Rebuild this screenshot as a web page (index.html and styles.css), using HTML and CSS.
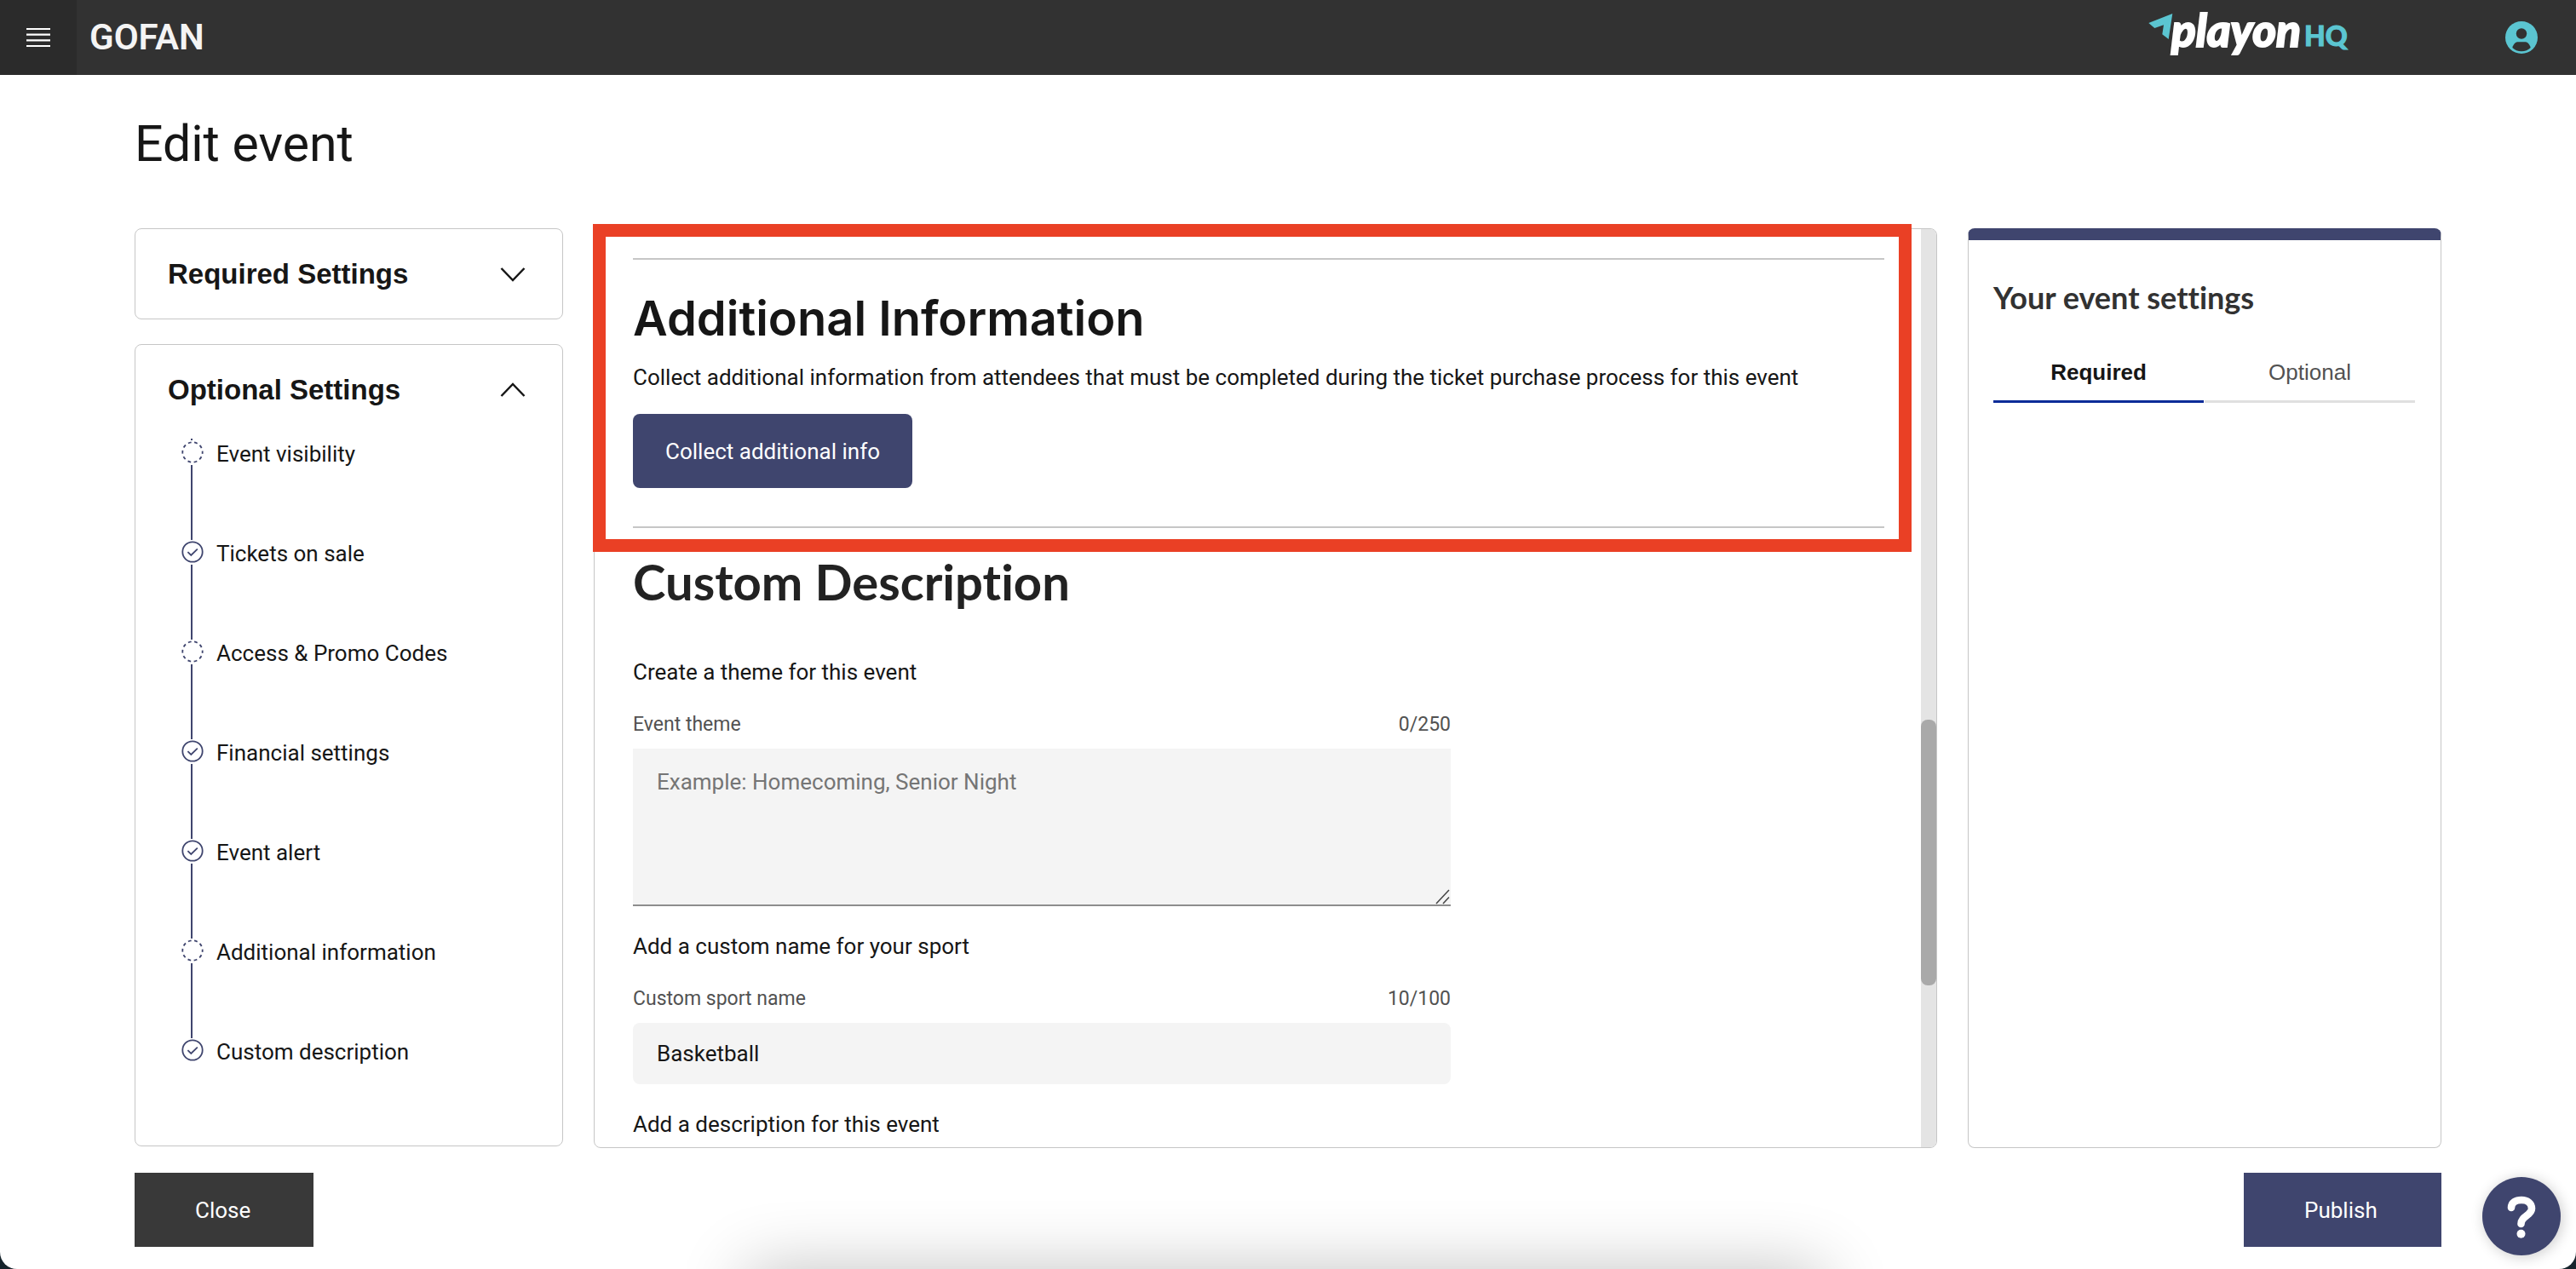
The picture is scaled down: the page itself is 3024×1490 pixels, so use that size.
FILE: index.html
```html
<!DOCTYPE html>
<html lang="en">
<head>
<meta charset="utf-8">
<meta name="viewport" content="width=device-width, initial-scale=1">
<title>GOFAN – Edit event</title>
<link rel="stylesheet" href="styles.css">
</head>
<body>
<svg class="sprite" aria-hidden="true">
  <symbol id="step-empty" viewBox="0 0 28 29">
    <circle cx="14" cy="14" r="11.7" fill="none" stroke="#3f456e" stroke-width="1.8" stroke-dasharray="3.8 3.55" stroke-dashoffset="1.9"/>
  </symbol>
  <symbol id="step-done" viewBox="0 0 28 29">
    <circle cx="14" cy="14" r="11.7" fill="none" stroke="#3f456e" stroke-width="1.8"/>
    <path d="M8.4 14.2l3.9 3.8 7.5-7.4" fill="none" stroke="#3f456e" stroke-width="1.8"/>
  </symbol>
</svg>
<div class="app">
  <header class="topbar">
    <button class="menu" type="button" aria-label="Open menu">
      <svg width="28" height="24" viewBox="0 0 28 24"><path d="M0 2h28M0 8.700h28M0 15.400h28M0 22h28" stroke="#fff" stroke-width="2.200"/></svg>
    </button>
    <a class="brand" href="#">GOFAN</a>
    <svg class="logo" width="240" height="88" viewBox="0 0 240 88" role="img" aria-label="playon HQ">
      <path d="M2.300 27L30.300 16L25.700 46L18.300 40.300L20 29.300L9.300 33z" fill="#5bc5d1"/>
      <text class="logo-name" x="29" y="55">playon</text>
      <text class="logo-hq" x="185" y="54">HQ</text>
    </svg>
    <button class="account" type="button" aria-label="Account">
      <svg width="38" height="38" viewBox="0 0 38 38">
        <circle cx="19" cy="19" r="19" fill="#5bc5d1"/>
        <circle cx="19" cy="14.500" r="6.200" fill="#323232"/>
        <path d="M8.300 31c1.400-4.800 4-6.700 7-6.700h7.400c3 0 5.600 1.900 7 6.700-2.700 2.800-6.500 4.300-10.700 4.300s-8-1.500-10.700-4.300z" fill="#323232"/>
      </svg>
    </button>
  </header>

  <main class="page">
    <h1 class="page-title">Edit event</h1>
    <div class="workspace">
      <nav class="sidebar" aria-label="Event settings">
        <section class="card">
          <button class="card-toggle" type="button" aria-expanded="false">Required Settings
            <svg width="32" height="32" viewBox="0 0 32 32"><path d="M2.500 9L16 23L29.500 9" fill="none" stroke="#161616" stroke-width="2.500"/></svg>
          </button>
        </section>
        <section class="card card-grow">
          <button class="card-toggle" type="button" aria-expanded="true">Optional Settings
            <svg width="32" height="32" viewBox="0 0 32 32"><path d="M2.500 23L16 9L29.500 23" fill="none" stroke="#161616" stroke-width="2.500"/></svg>
          </button>
          <ol class="steps">
            <li class="step"><svg class="step-icon"><use href="#step-empty"/></svg><a href="#visibility">Event visibility</a></li>
            <li class="step"><svg class="step-icon"><use href="#step-done"/></svg><a href="#tickets">Tickets on sale</a></li>
            <li class="step"><svg class="step-icon"><use href="#step-empty"/></svg><a href="#access">Access &amp; Promo Codes</a></li>
            <li class="step"><svg class="step-icon"><use href="#step-done"/></svg><a href="#financial">Financial settings</a></li>
            <li class="step"><svg class="step-icon"><use href="#step-done"/></svg><a href="#alert">Event alert</a></li>
            <li class="step"><svg class="step-icon"><use href="#step-empty"/></svg><a href="#additional">Additional information</a></li>
            <li class="step"><svg class="step-icon"><use href="#step-done"/></svg><a href="#custom">Custom description</a></li>
          </ol>
        </section>
      </nav>

      <div class="editor">
        <div class="editor-panel">
          <form class="editor-content">
            <section id="additional">
              <hr class="rule">
              <h2 class="heading heading-info">Additional Information</h2>
              <p class="lead">Collect additional information from attendees that must be completed during the ticket purchase process for this event</p>
              <button class="btn btn-primary btn-rounded" type="button">Collect additional info</button>
              <hr class="rule">
            </section>
            <section id="custom" class="custom">
              <h2 class="heading heading-custom">Custom Description</h2>
              <p class="prompt">Create a theme for this event</p>
              <div class="field-head"><label for="theme">Event theme</label><span>0/250</span></div>
              <div class="area">
                <textarea id="theme" class="control control-area" placeholder="Example: Homecoming, Senior Night"></textarea>
                <svg class="grip" width="18" height="18" viewBox="0 0 18 18" aria-hidden="true"><path d="M1 17L16 1M9 17L16 9.500" stroke="#444" stroke-width="1.500"/></svg>
              </div>
              <p class="prompt">Add a custom name for your sport</p>
              <div class="field-head"><label for="sport">Custom sport name</label><span>10/100</span></div>
              <input id="sport" class="control control-line" type="text" value="Basketball">
              <p class="prompt">Add a description for this event</p>
            </section>
          </form>
          <div class="scroll-track" aria-hidden="true"><div class="scroll-thumb"></div></div>
        </div>
        <div class="highlight" aria-hidden="true"></div>
      </div>

      <aside class="summary">
        <h2 class="summary-title">Your event settings</h2>
        <div class="tabs" role="tablist">
          <button class="tab tab-active" type="button" role="tab" aria-selected="true">Required</button>
          <button class="tab" type="button" role="tab" aria-selected="false">Optional</button>
        </div>
      </aside>
    </div>

    <footer class="actions">
      <button class="btn btn-dark" type="button">Close</button>
      <button class="btn btn-primary btn-publish" type="button">Publish</button>
    </footer>
  </main>

  <button class="help" type="button" aria-label="Help">
    <svg width="92" height="92" viewBox="0 0 92 92"><path d="M34 36C34 30 39 27 46 27C53 27 58 31 58 37C58 45 45.500 46 45.500 55" fill="none" stroke="#fff" stroke-width="8.600" stroke-linecap="round"/><circle cx="45.500" cy="66.700" r="5" fill="#fff"/></svg>
  </button>
  <div class="dock-shadow" aria-hidden="true"></div>
</div>
</body>
</html>
```
FILE: styles.css
```css
:root {
  --ink: #161616;
  --navy: #3f456e;
  --line: #c6c6c6;
  --text: Roboto, "Noto Sans", sans-serif;
  --grotesk: "Liberation Sans", Arial, sans-serif;
  --lato: Lato, sans-serif;
}

* { box-sizing: border-box; }

html { background: #16242c; }

body {
  margin: 0;
  font: 400 26px/32px var(--text);
  font-variant-ligatures: none;
  color: var(--ink);
}

h1, h2, p, ol { margin: 0; padding: 0; }

button { border: 0; padding: 0; background: none; color: inherit; font: inherit; }

a { color: inherit; text-decoration: none; }

svg { display: block; }

.sprite { position: absolute; width: 0; height: 0; }

.app {
  position: relative;
  display: flex;
  flex-direction: column;
  height: 100vh;
  overflow: hidden;
  background: #fff;
  border-radius: 0 0 20px 20px;
}

/* Top bar */
.topbar {
  display: flex;
  align-items: center;
  flex: none;
  height: 88px;
  padding-right: 20px;
  background: #323232;
}

.menu {
  display: grid;
  place-items: center;
  width: 90px;
  height: 88px;
  background: #2b2b2b;
}

.brand {
  padding-left: 15px;
  font-size: 42px;
  font-weight: 600;
  line-height: 48px;
  color: #f4f4f4;
}

.logo { margin-left: auto; }

.logo-name {
  font: italic 900 53px var(--lato);
  fill: #fff;
  stroke: #fff;
  stroke-width: 2px;
}

.logo-hq {
  font: 900 32px var(--lato);
  fill: #5bc5d1;
  stroke: #5bc5d1;
  stroke-width: 1px;
}

.account {
  display: grid;
  place-items: center;
  width: 88px;
  height: 86px;
  margin-left: 156px;
}

/* Page frame */
.page {
  display: flex;
  flex: 1;
  flex-direction: column;
  min-height: 0;
  padding: 46px 158px 26px;
}

.page-title {
  margin-bottom: 64px;
  font-size: 59px;
  font-weight: 400;
  line-height: 70px;
}

.workspace {
  display: grid;
  flex: 1;
  grid-template-columns: 503px minmax(0, 1fr) 556px;
  gap: 36px;
  min-height: 0;
}

/* Left navigation */
.sidebar {
  display: flex;
  flex-direction: column;
  gap: 29px;
  padding-bottom: 2px;
}

.card {
  border: 1px solid var(--line);
  border-radius: 8px;
}

.card-grow { flex: 1; }

.card-toggle {
  display: flex;
  align-items: center;
  justify-content: space-between;
  width: 100%;
  height: 105px;
  padding: 0 42px 0 38px;
  font: 700 33px/40px var(--grotesk);
}

.steps {
  padding: 7px 0 0 53px;
  list-style: none;
}

.step {
  position: relative;
  display: flex;
  align-items: flex-start;
  gap: 14px;
  height: 117px;
}

.step-icon { width: 28px; height: 29px; }

.step::after {
  content: "";
  position: absolute;
  top: 29px;
  bottom: 0;
  left: 12px;
  width: 2px;
  background: var(--navy);
}

.step:last-child::after { display: none; }

.step:first-child::before {
  content: "";
  position: absolute;
  top: -2px;
  left: 12px;
  width: 2px;
  height: 2px;
  background: var(--navy);
}

/* Editor */
.editor {
  position: relative;
  min-height: 0;
}

.editor-panel {
  display: flex;
  height: 100%;
  overflow: hidden;
  border: 1px solid var(--line);
  border-radius: 8px;
}

.editor-content {
  flex: 1;
  min-width: 0;
  padding: 34px 43px 0 45px;
}

.rule {
  height: 2px;
  margin: 0;
  border: 0;
  background: var(--line);
}

.heading-info {
  margin: 35px 0 19px;
  font: 600 56px/68px Inter, sans-serif;
}

.lead { margin-bottom: 27px; }

.btn {
  height: 87px;
  color: #fff;
  text-align: left;
}

.btn-primary { background: var(--navy); }

.btn-rounded {
  display: block;
  margin-bottom: 45px;
  padding: 0 38px;
  border-radius: 8px;
}

.custom {
  max-width: 960px;
  padding-top: 28px;
}

.heading-custom {
  margin-bottom: 55px;
  font: 700 58px/70px var(--lato);
  font-variant-ligatures: none;
  color: #222;
}

.field-head {
  display: flex;
  justify-content: space-between;
  margin: 32px 0 14px;
  font-size: 23px;
  line-height: 28px;
  color: #525252;
}

.area {
  position: relative;
  margin-bottom: 31px;
}

.control {
  display: block;
  width: 100%;
  margin: 0;
  border: 0;
  background: #f4f4f4;
  color: var(--ink);
  font: inherit;
}

.control-area {
  height: 185px;
  padding: 23px 28px;
  border-bottom: 2px solid #8d8d8d;
  resize: none;
}

.control-area::placeholder { color: #757575; }

.control-line {
  height: 72px;
  margin-bottom: 31px;
  padding: 0 28px;
  border-radius: 8px;
}

.grip {
  position: absolute;
  right: 0;
  bottom: 2px;
}

.scroll-track {
  position: relative;
  width: 18px;
  background: #e4e4e4;
}

.scroll-thumb {
  position: absolute;
  top: 53.4%;
  width: 100%;
  height: 29%;
  border-radius: 8px;
  background: #a9a9a9;
}

.highlight {
  position: absolute;
  top: -5px;
  right: 30px;
  left: -1px;
  height: 385px;
  border: 15px solid #ea4025;
  pointer-events: none;
}

/* Summary */
.summary {
  padding: 45px 30px 0 29px;
  border: 1px solid var(--line);
  border-top: 14px solid var(--navy);
  border-radius: 8px;
}

.summary-title {
  margin-bottom: 50px;
  font: 700 36px/44px var(--lato);
  font-variant-ligatures: none;
  color: #323232;
}

.tabs {
  display: grid;
  grid-template-columns: 1fr 1fr;
  gap: 1px;
}

.tab {
  padding-bottom: 17px;
  border-bottom: 3px solid #e0e0e0;
  font: 400 26px/32px var(--grotesk);
  color: #525252;
}

.tab-active {
  border-color: #0b2b98;
  font-weight: 700;
  color: var(--ink);
}

/* Footer */
.actions {
  display: flex;
  justify-content: space-between;
  margin-top: 29px;
}

.btn-dark {
  width: 210px;
  padding-left: 71px;
  background: #393939;
}

.btn-publish {
  width: 232px;
  padding-left: 71px;
}

.help {
  position: absolute;
  right: 18px;
  bottom: 16px;
  border-radius: 50%;
  background: var(--navy);
  box-shadow: 2px 2px 16px rgba(0, 0, 0, .2);
}

.dock-shadow {
  position: absolute;
  top: 100%;
  right: 884px;
  left: 876px;
  height: 100px;
  box-shadow: 0 0 80px rgba(0, 0, 0, .24);
}
```
